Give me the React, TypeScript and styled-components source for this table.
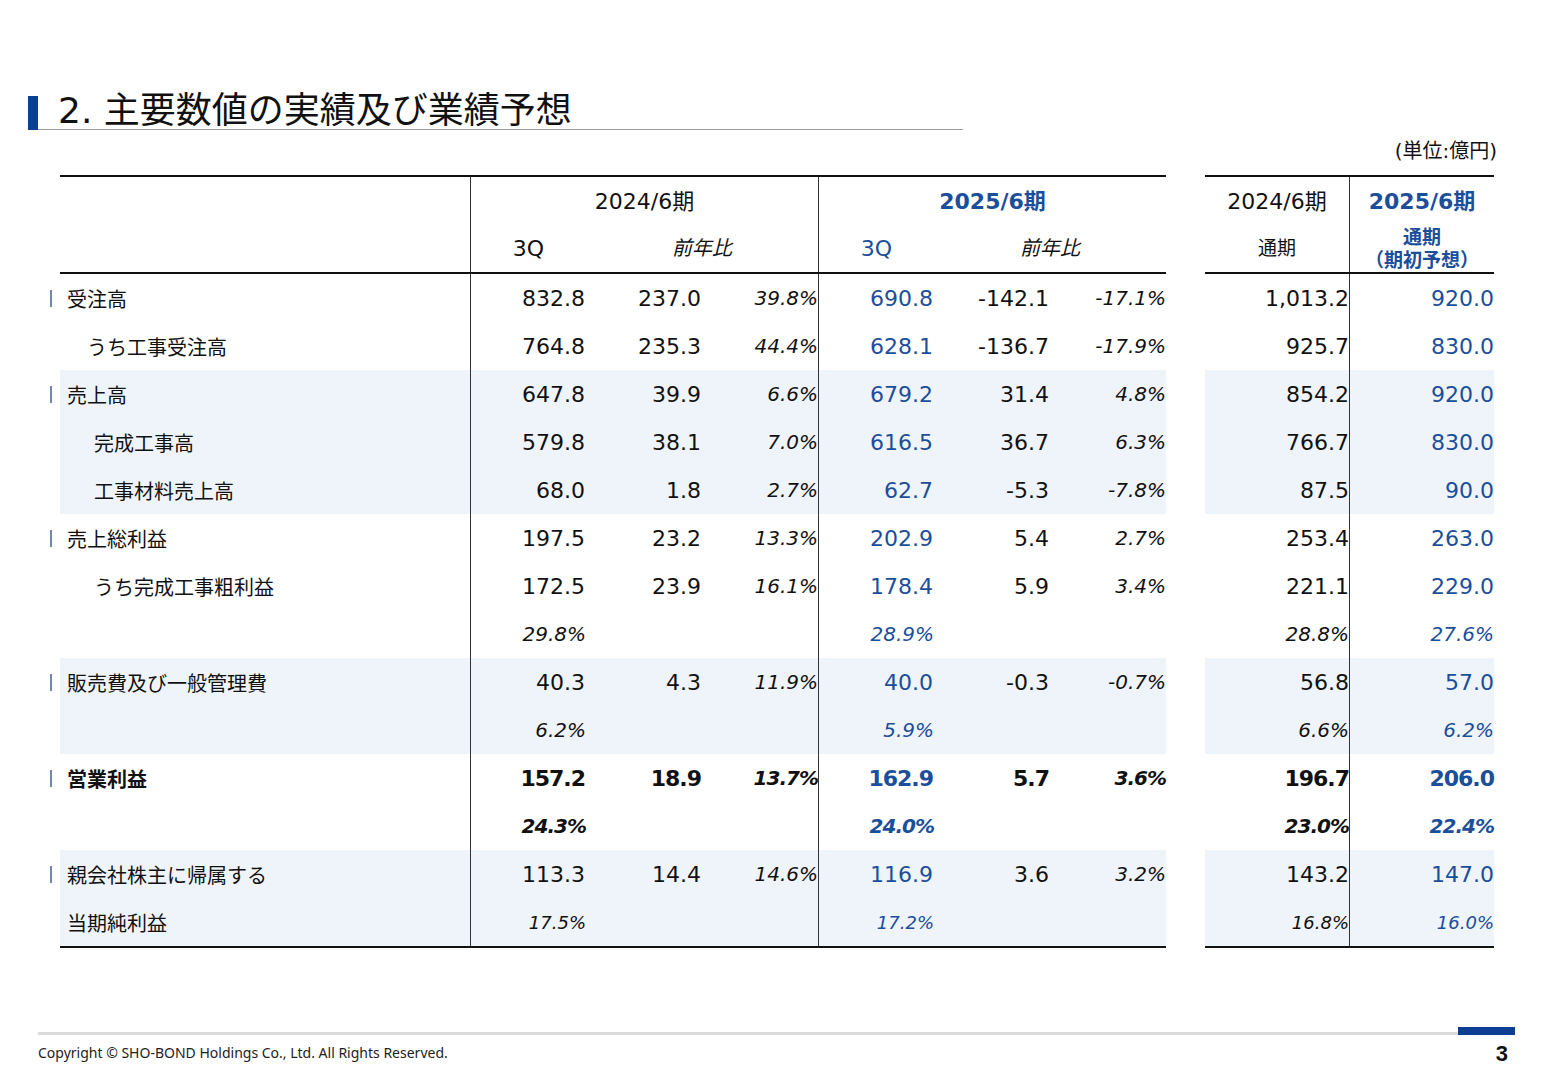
import styled, { createGlobalStyle, css } from 'styled-components';

const GlobalStyle = createGlobalStyle`
  html, body {
    margin: 0;
    padding: 0;
    background: #ffffff;
  }
  body {
    font-family: "DejaVu Sans", "Noto Sans CJK JP", sans-serif;
    color: #111111;
  }
`;

const BLUE = '#1B4E9B';
const NAVY = '#0C3F93';

const Page = styled.div`
  width: 1551px;
  height: 1069px;
  display: flex;
  flex-direction: column;
  background: #ffffff;
`;

const TitleRow = styled.header`
  display: flex;
  align-items: flex-end;
  width: 935px;
  padding: 92px 0 0 28px;
`;

const TitleBar = styled.span`
  width: 10px;
  height: 34px;
  background: ${NAVY};
`;

const TitleText = styled.h1`
  flex: 1;
  margin: 0;
  padding-left: 20px;
  border-bottom: 1px solid #9c9c9c;
  font-size: 36px;
  font-weight: 400;
  line-height: 37px;
  color: #111111;
  white-space: nowrap;
`;

const Unit = styled.div`
  margin-top: 9px;
  padding-right: 54px;
  text-align: right;
  font-size: 20px;
  line-height: 24px;
`;

const Tables = styled.div`
  display: flex;
  gap: 39px;
  padding-left: 60px;
  margin-top: 12px;
`;

const Table = styled.div`
  border-top: 2px solid #111111;
  border-bottom: 2px solid #111111;
`;

const Head = styled.div<{ $cols: string }>`
  display: grid;
  grid-template-columns: ${(p) => p.$cols};
  grid-template-rows: 48px 47px;
  border-bottom: 2px solid #111111;
`;

const HeadCell = styled.div<{ $area: string; $divider?: boolean; $tone?: 'blue' | 'black'; $bold?: boolean; $italic?: boolean; $size?: number }>`
  grid-area: ${(p) => p.$area};
  display: flex;
  align-items: center;
  justify-content: center;
  text-align: center;
  font-size: ${(p) => p.$size ?? 22}px;
  line-height: 23px;
  color: ${(p) => (p.$tone === 'blue' ? BLUE : '#111111')};
  font-weight: ${(p) => (p.$bold ? 700 : 400)};
  font-style: ${(p) => (p.$italic ? 'italic' : 'normal')};
  ${(p) => p.$divider && css`border-left: 1px solid #333333;`}
`;

const Row = styled.div<{ $cols: string; $shade?: boolean }>`
  display: grid;
  grid-template-columns: ${(p) => p.$cols};
  height: 48px;
  background: ${(p) => (p.$shade ? '#EFF4FA' : 'transparent')};
`;

const Label = styled.div<{ $indent: number; $marker?: boolean; $bold?: boolean }>`
  position: relative;
  display: flex;
  align-items: center;
  padding-left: ${(p) => p.$indent}px;
  font-family: "Noto Sans CJK JP", sans-serif;
  font-size: 20px;
  font-weight: ${(p) => (p.$bold ? 700 : 400)};
  white-space: nowrap;
  ${(p) =>
    p.$marker &&
    css`
      &::before {
        content: '';
        position: absolute;
        left: -10px;
        top: 16px;
        width: 2px;
        height: 17px;
        background: #7088AE;
      }
    `}
`;

const Num = styled.div<{ $divider?: boolean; $tone?: 'blue' | 'black'; $bold?: boolean; $italic?: boolean; $size: number; $pad: number }>`
  display: flex;
  align-items: center;
  justify-content: flex-end;
  padding-right: ${(p) => p.$pad}px;
  font-size: ${(p) => p.$size}px;
  color: ${(p) => (p.$tone === 'blue' ? BLUE : '#111111')};
  font-weight: ${(p) => (p.$bold ? 700 : 400)};
  font-style: ${(p) => (p.$italic ? 'italic' : 'normal')};
  letter-spacing: ${(p) => (p.$bold ? '-1px' : '0')};
  white-space: nowrap;
  ${(p) => p.$divider && css`border-left: 1px solid #333333;`}
`;

const Footer = styled.footer`
  margin-top: auto;
  padding: 0 36px 0 38px;
`;

const FooterRule = styled.div`
  display: flex;
  align-items: flex-end;
`;

const RuleLine = styled.div`
  flex: 1;
  height: 3px;
  background: #DCDCDC;
`;

const RuleAccent = styled.div`
  width: 57px;
  height: 8px;
  background: ${NAVY};
`;

const FooterText = styled.div`
  display: flex;
  align-items: center;
  justify-content: space-between;
  height: 34px;
`;

const Copyright = styled.span`
  font-family: "Noto Sans", sans-serif;
  font-size: 14px;
  color: #222222;
`;

const PageNo = styled.span`
  padding: 3px 7px 0 0;
  font-family: "Liberation Sans", sans-serif;
  font-size: 22px;
  font-weight: 700;
  color: #111111;
`;

type Kind = 'main' | 'sub' | 'sub2' | 'plain';

type Line = {
  label: string;
  kind: Kind;
  shade?: boolean;
  bold?: boolean;
  ratio?: boolean;
  small?: boolean;
  a: string[];
  b: string[];
  prev: string;
  plan: string;
};

const lines: Line[] = [
  { label: '受注高', kind: 'main', a: ['832.8', '237.0', '39.8%'], b: ['690.8', '-142.1', '-17.1%'], prev: '1,013.2', plan: '920.0' },
  { label: 'うち工事受注高', kind: 'sub', a: ['764.8', '235.3', '44.4%'], b: ['628.1', '-136.7', '-17.9%'], prev: '925.7', plan: '830.0' },
  { label: '売上高', kind: 'main', shade: true, a: ['647.8', '39.9', '6.6%'], b: ['679.2', '31.4', '4.8%'], prev: '854.2', plan: '920.0' },
  { label: '完成工事高', kind: 'sub2', shade: true, a: ['579.8', '38.1', '7.0%'], b: ['616.5', '36.7', '6.3%'], prev: '766.7', plan: '830.0' },
  { label: '工事材料売上高', kind: 'sub2', shade: true, a: ['68.0', '1.8', '2.7%'], b: ['62.7', '-5.3', '-7.8%'], prev: '87.5', plan: '90.0' },
  { label: '売上総利益', kind: 'main', a: ['197.5', '23.2', '13.3%'], b: ['202.9', '5.4', '2.7%'], prev: '253.4', plan: '263.0' },
  { label: 'うち完成工事粗利益', kind: 'sub2', a: ['172.5', '23.9', '16.1%'], b: ['178.4', '5.9', '3.4%'], prev: '221.1', plan: '229.0' },
  { label: '', kind: 'plain', ratio: true, a: ['29.8%', '', ''], b: ['28.9%', '', ''], prev: '28.8%', plan: '27.6%' },
  { label: '販売費及び一般管理費', kind: 'main', shade: true, a: ['40.3', '4.3', '11.9%'], b: ['40.0', '-0.3', '-0.7%'], prev: '56.8', plan: '57.0' },
  { label: '', kind: 'plain', shade: true, ratio: true, a: ['6.2%', '', ''], b: ['5.9%', '', ''], prev: '6.6%', plan: '6.2%' },
  { label: '営業利益', kind: 'main', bold: true, a: ['157.2', '18.9', '13.7%'], b: ['162.9', '5.7', '3.6%'], prev: '196.7', plan: '206.0' },
  { label: '', kind: 'plain', bold: true, ratio: true, a: ['24.3%', '', ''], b: ['24.0%', '', ''], prev: '23.0%', plan: '22.4%' },
  { label: '親会社株主に帰属する', kind: 'main', shade: true, a: ['113.3', '14.4', '14.6%'], b: ['116.9', '3.6', '3.2%'], prev: '143.2', plan: '147.0' },
  { label: '当期純利益', kind: 'plain', shade: true, ratio: true, small: true, a: ['17.5%', '', ''], b: ['17.2%', '', ''], prev: '16.8%', plan: '16.0%' },
];

const indentOf: Record<Kind, number> = { main: 7, sub: 27, sub2: 34, plain: 7 };

const LEFT_COLS = '410px repeat(6, 116px)';
const RIGHT_COLS = '144px 145px';

function cellStyle(line: Line, idx: number) {
  // idx 0..2 within a group; 0 = value, 1 = diff, 2 = percent
  const pct = line.ratio || idx === 2;
  return {
    $size: line.ratio ? (line.small ? 18 : 20) : pct ? 20 : 22,
    $italic: pct,
    $bold: line.bold,
    $pad: pct ? 0 : 1,
  };
}

export default function App() {
  return (
    <Page>
      <GlobalStyle />
      <TitleRow>
        <TitleBar />
        <TitleText>2. 主要数値の実績及び業績予想</TitleText>
      </TitleRow>
      <Unit>(単位:億円)</Unit>

      <Tables>
        <Table>
          <Head $cols={LEFT_COLS}>
            <HeadCell $area="1 / 1 / 3 / 2" />
            <HeadCell $area="1 / 2 / 2 / 5" $divider>2024/6期</HeadCell>
            <HeadCell $area="1 / 5 / 2 / 8" $divider $tone="blue" $bold>2025/6期</HeadCell>
            <HeadCell $area="2 / 2 / 3 / 3" $divider>3Q</HeadCell>
            <HeadCell $area="2 / 3 / 3 / 5" $italic $size={20}>前年比</HeadCell>
            <HeadCell $area="2 / 5 / 3 / 6" $divider $tone="blue">3Q</HeadCell>
            <HeadCell $area="2 / 6 / 3 / 8" $italic $size={20}>前年比</HeadCell>
          </Head>
          {lines.map((line, i) => (
            <Row key={i} $cols={LEFT_COLS} $shade={line.shade}>
              <Label $indent={indentOf[line.kind]} $marker={line.kind === 'main'} $bold={line.bold}>
                {line.label}
              </Label>
              {line.a.map((v, j) => (
                <Num key={`a${j}`} $divider={j === 0} {...cellStyle(line, j)}>
                  {v}
                </Num>
              ))}
              {line.b.map((v, j) => (
                <Num key={`b${j}`} $divider={j === 0} $tone={j === 0 ? 'blue' : 'black'} {...cellStyle(line, j)}>
                  {v}
                </Num>
              ))}
            </Row>
          ))}
        </Table>

        <Table>
          <Head $cols={RIGHT_COLS}>
            <HeadCell $area="1 / 1 / 2 / 2">2024/6期</HeadCell>
            <HeadCell $area="1 / 2 / 2 / 3" $divider $tone="blue" $bold>2025/6期</HeadCell>
            <HeadCell $area="2 / 1 / 3 / 2" $size={19}>通期</HeadCell>
            <HeadCell $area="2 / 2 / 3 / 3" $divider $tone="blue" $bold $size={19}>
              通期
              <br />
              （期初予想）
            </HeadCell>
          </Head>
          {lines.map((line, i) => (
            <Row key={i} $cols={RIGHT_COLS} $shade={line.shade}>
              <Num {...cellStyle(line, 0)} $pad={0} $italic={line.ratio}>
                {line.prev}
              </Num>
              <Num $divider $tone="blue" {...cellStyle(line, 0)} $pad={0} $italic={line.ratio}>
                {line.plan}
              </Num>
            </Row>
          ))}
        </Table>
      </Tables>

      <Footer>
        <FooterRule>
          <RuleLine />
          <RuleAccent />
        </FooterRule>
        <FooterText>
          <Copyright>Copyright © SHO-BOND Holdings Co., Ltd. All Rights Reserved.</Copyright>
          <PageNo>3</PageNo>
        </FooterText>
      </Footer>
    </Page>
  );
}
